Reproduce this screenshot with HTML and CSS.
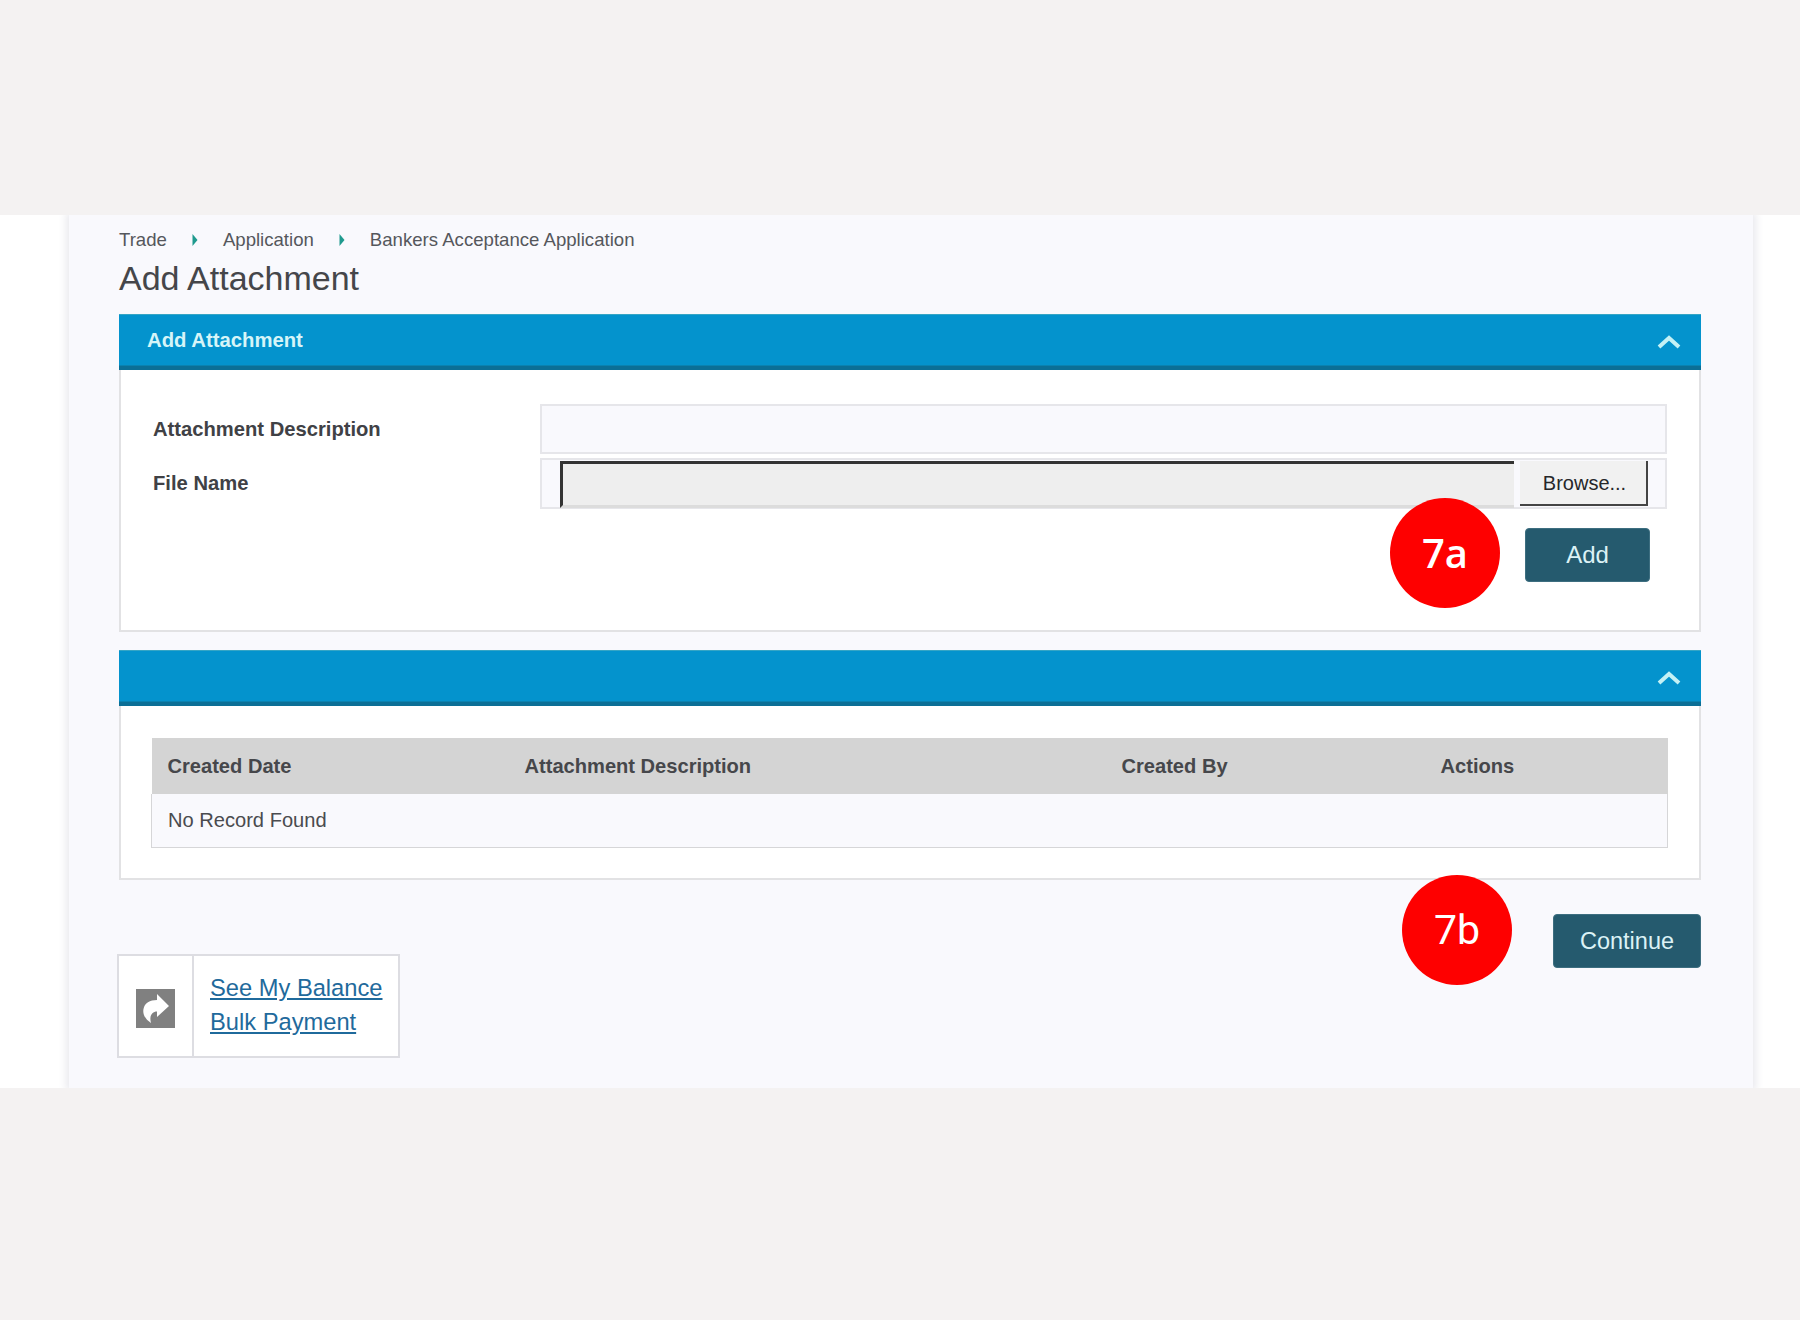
FILE: index.html
```html
<!DOCTYPE html>
<html lang="en">
<head>
<meta charset="utf-8">
<title>Add Attachment</title>
<link rel="stylesheet" href="styles.css">
</head>
<body>
<div class="stage">
  <main class="main">
    <nav class="crumbs">
      <span>Trade</span>
      <svg class="crumb-arrow" viewBox="0 0 6 14"><path d="M0.5 1 L5.5 7 L0.5 13 Z"/></svg>
      <span>Application</span>
      <svg class="crumb-arrow" viewBox="0 0 6 14"><path d="M0.5 1 L5.5 7 L0.5 13 Z"/></svg>
      <span>Bankers Acceptance Application</span>
    </nav>
    <h1 class="page-title">Add Attachment</h1>

    <section class="panel">
      <header class="panel-head">
        <span class="panel-title">Add Attachment</span>
        <svg class="chevron" viewBox="0 0 24 14"><path d="M2 12 L12 3 L22 12"/></svg>
      </header>
      <div class="panel-body form-body">
        <div class="form-grid">
          <label class="field-label">Attachment Description</label>
          <input class="text-input" type="text">
          <label class="field-label">File Name</label>
          <div class="file-row">
            <div class="file-path"></div>
            <button class="browse" type="button">Browse...</button>
          </div>
        </div>
        <div class="form-actions">
          <button class="btn btn-add" type="button">Add</button>
        </div>
      </div>
      <div class="badge badge-a">7a</div>
    </section>

    <section class="panel panel-list">
      <header class="panel-head">
        <span class="panel-title"></span>
        <svg class="chevron" viewBox="0 0 24 14"><path d="M2 12 L12 3 L22 12"/></svg>
      </header>
      <div class="panel-body list-body">
        <table class="records">
          <thead>
            <tr>
              <th class="col-date">Created Date</th>
              <th class="col-desc">Attachment Description</th>
              <th class="col-by">Created By</th>
              <th>Actions</th>
            </tr>
          </thead>
          <tbody>
            <tr><td colspan="4">No Record Found</td></tr>
          </tbody>
        </table>
      </div>
    </section>

    <div class="footer-row">
      <div class="link-box">
        <div class="link-icon">
          <svg class="share" viewBox="0 0 39 39">
            <rect width="39" height="39"/>
            <path d="M21 5 L33 17 L21 28 V22.500 C16 22.500 13 27 15 34 C9 30 6.500 25 7.500 20 C8.500 14 14 11 21 11 Z"/>
          </svg>
        </div>
        <div class="links">
          <a href="#">See My Balance</a>
          <a href="#">Bulk Payment</a>
        </div>
      </div>
      <button class="btn btn-continue" type="button">Continue</button>
      <div class="badge badge-b">7b</div>
    </div>
  </main>
</div>
</body>
</html>
```

FILE: styles.css
```css
* { box-sizing: border-box; }

html, body { margin: 0; padding: 0; }

body {
  height: 1320px;
  background: #f4f2f2;
  font-family: "Liberation Sans", Arial, sans-serif;
  color: #444;
  overflow: hidden;
}

.stage {
  margin-top: 215px;
  height: 873px;
  background: #fff;
  padding: 0 47px 0 69px;
  overflow: hidden;
}

.main {
  height: 100%;
  background: #f9f9fd;
  padding: 13px 52px 0 50px;
  box-shadow: 0 0 8px 3px #e9e9ee;
}

.crumbs {
  display: flex;
  align-items: center;
  height: 24px;
  font-size: 18.600px;
  color: #55575c;
}

.crumb-arrow {
  width: 6px;
  height: 14px;
  margin: 0 25px;
  fill: #1f9a8e;
}

.page-title {
  margin: 7px 0 0;
  height: 55px;
  font-size: 34px;
  font-weight: 400;
  line-height: 38px;
  color: #45464a;
}

.panel {
  position: relative;
}

.panel-list {
  margin-top: 18px;
}

.panel-head {
  display: flex;
  align-items: center;
  justify-content: space-between;
  height: 56px;
  padding: 0 21px 1px 28px;
  background: #0493cd;
  border-top: 1px solid #35a5c5;
  border-bottom: 4px solid #0b6f96;
  box-shadow: inset 0 -1px 0 #0a82b0;
}

.panel-title {
  font-size: 20.300px;
  font-weight: 700;
  color: #d6f5f8;
}

.chevron {
  width: 24px;
  height: 14px;
  margin: 3px -1px 0 0;
  fill: none;
  stroke: #c4f1f5;
  stroke-width: 4;
}

.panel-body {
  background: #fff;
  border: 2px solid #e2e2e4;
  border-top: 0;
}

.form-body {
  height: 262px;
  padding: 34px 32px 0;
}

.form-grid {
  display: grid;
  grid-template-columns: 387px 1fr;
  grid-template-rows: 50px 51px;
  row-gap: 4px;
  align-items: center;
}

.field-label {
  font-size: 20.200px;
  font-weight: 700;
  color: #404145;
}

.text-input {
  display: block;
  width: 100%;
  height: 50px;
  background: #f9f9fd;
  border: 2px solid #e6e6ea;
  outline: 0;
}

.file-row {
  display: flex;
  align-items: flex-start;
  gap: 6px;
  height: 51px;
  padding: 1px 17px 0 18px;
  background: #f9f9fd;
  border: 2px solid #e6e6ea;
}

.file-path {
  flex: 1;
  height: 47px;
  background: #eeeeee;
  border-top: 3px solid #333;
  border-left: 3px solid #333;
  border-bottom: 3px solid #dcdcdc;
}

.browse {
  width: 128px;
  height: 45px;
  padding: 2px 0 0 3px;
  background: #f1f1f1;
  border: 0;
  border-right: 2px solid #444;
  border-bottom: 2px solid #444;
  font-family: inherit;
  font-size: 20px;
  color: #26272a;
}

.form-actions {
  display: flex;
  justify-content: flex-end;
  margin: 19px 17px 0 0;
}

.btn {
  height: 54px;
  padding: 0;
  background: #255a6e;
  border: 1px solid #3d6e80;
  border-radius: 4px;
  font-family: inherit;
  color: #dcf2f6;
}

.btn-add {
  width: 125px;
  font-size: 24px;
}

.btn-continue {
  width: 148px;
  font-size: 23.500px;
}

.badge {
  position: absolute;
  display: flex;
  align-items: center;
  justify-content: center;
  width: 110px;
  height: 110px;
  border-radius: 50%;
  background: #fe0000;
  color: #fff;
}

.badge-a {
  top: 184px;
  right: 201px;
  padding-bottom: 2px;
  font-family: "Open Sans", sans-serif;
  font-size: 40px;
  font-weight: 600;
}

.badge-b {
  top: -39px;
  right: 189px;
  font-family: Roboto, sans-serif;
  font-size: 41px;
  font-weight: 400;
}

.list-body {
  height: 174px;
  padding: 32px 31px 0 30px;
}

.records {
  width: 100%;
  border-collapse: collapse;
  table-layout: fixed;
  font-size: 20.100px;
}

.records th {
  height: 56px;
  padding: 0 0 0 16px;
  background: #d4d4d4;
  text-align: left;
  font-weight: 700;
  color: #46474b;
}

.col-date { width: 357px; }
.col-desc { width: 597px; }
.col-by { width: 319px; }

.records td {
  height: 53px;
  padding: 0 0 0 16px;
  background: #f9f9fd;
  border: 1px solid #d6d6d8;
  border-top: 0;
  color: #4a4b4f;
}

.footer-row {
  position: relative;
  display: flex;
  justify-content: space-between;
  align-items: flex-start;
  margin-top: 34px;
}

.link-box {
  display: flex;
  width: 283px;
  height: 104px;
  margin: 40px 0 0 -2px;
  background: #fff;
  border: 2px solid #dddde2;
}

.link-icon {
  display: flex;
  align-items: center;
  justify-content: center;
  width: 75px;
  padding: 5px 0 0 0;
  border-right: 2px solid #dddde2;
}

.share {
  width: 39px;
  height: 39px;
}

.share rect { fill: #808080; }
.share path { fill: #fff; }

.links {
  display: flex;
  flex-direction: column;
  padding: 15px 0 0 16px;
  font-size: 23.700px;
  line-height: 34px;
}

.links a {
  color: #1f6a9c;
  text-decoration: underline;
}
```
